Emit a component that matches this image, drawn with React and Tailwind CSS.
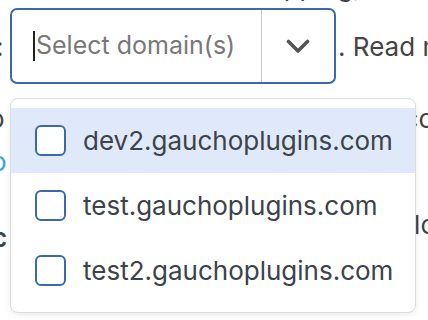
import { useState } from 'react';

const domains = ['dev2.gauchoplugins.com', 'test.gauchoplugins.com', 'test2.gauchoplugins.com'];

function Chevron() {
    return (
        <svg width="24" height="15" viewBox="0 0 24 15" fill="none">
            <path d="M2.5 2.5 L12 12 L21.5 2.5" stroke="#555" strokeWidth="3.6" strokeLinecap="round" strokeLinejoin="round" />
        </svg>
    );
}

export default function App() {
    const [checked, setChecked] = useState({});

    return (
        <div className="relative w-[428px] h-[320px] overflow-hidden bg-white text-[#3c434a] font-['Inter',sans-serif] whitespace-nowrap">
            {/* text of the page behind the menu */}
            <div className="h-[8px] relative">
                <div className="absolute left-[238px] -top-[28px] text-[26px] leading-[30px]">wrapping,</div>
            </div>
            <div className="flex items-center h-[76px]">
                <span className="w-[10px] shrink-0 text-[26px] -ml-[4px] mr-[4px]">:</span>
                <div className="flex shrink-0 w-[326px] h-[76px] rounded-[7px] border-[2.5px] border-[#3a6aa8] bg-white">
                    <div className="flex-1 flex items-center pl-[21px]">
                        <span className="w-[2px] h-[30px] bg-[#222] mr-[1px]" />
                        <span className="text-[25px] text-[#787878]">Select domain(s)</span>
                    </div>
                    <div className="w-[1.5px] bg-[#c8c8c8]" />
                    <div className="w-[72px] flex items-center justify-center">
                        <Chevron />
                    </div>
                </div>
                <span className="text-[26px] text-[#444] ml-[2px]">. Read more</span>
            </div>
            <div className="flex justify-between text-[26px] leading-[30px] mt-[20px]">
                <span className="-ml-[11px]">o</span>
                <span className="-mr-[6px]">co</span>
            </div>
            <div className="text-[26px] leading-[30px] mt-[13px] text-[#36a3d9]">
                <span className="-ml-[9px] inline-block">o</span>
            </div>
            <div className="flex justify-between text-[26px] leading-[30px] mt-[36px]">
                <span className="-ml-[8px] inline-block mt-[10px] font-semibold">c</span>
                <span className="-mr-[8px] inline-block -mt-[3px]">lo</span>
            </div>

            {/* dropdown menu */}
            <div className="absolute left-[10px] top-[98px] w-[406px] h-[215px] rounded-[8px] border border-[#dcdcdc] bg-white shadow-[0_2px_6px_rgba(0,0,0,0.08)] py-[9px]">
                {domains.map((d, i) => (
                    <label
                        key={d}
                        className={`flex items-center h-[65px] pl-[24px] cursor-pointer ${i === 0 ? 'bg-[#dfe9fa]' : ''}`}
                    >
                        <input
                            type="checkbox"
                            className="sr-only"
                            checked={!!checked[d]}
                            onChange={() => setChecked({ ...checked, [d]: !checked[d] })}
                        />
                        <span className="w-[31px] h-[31px] shrink-0 rounded-[6px] border-[2px] border-[#3a6aa8] bg-white" />
                        <span className="ml-[17px] text-[26px] text-[#3c434a]">{d}</span>
                    </label>
                ))}
            </div>
        </div>
    );
}
